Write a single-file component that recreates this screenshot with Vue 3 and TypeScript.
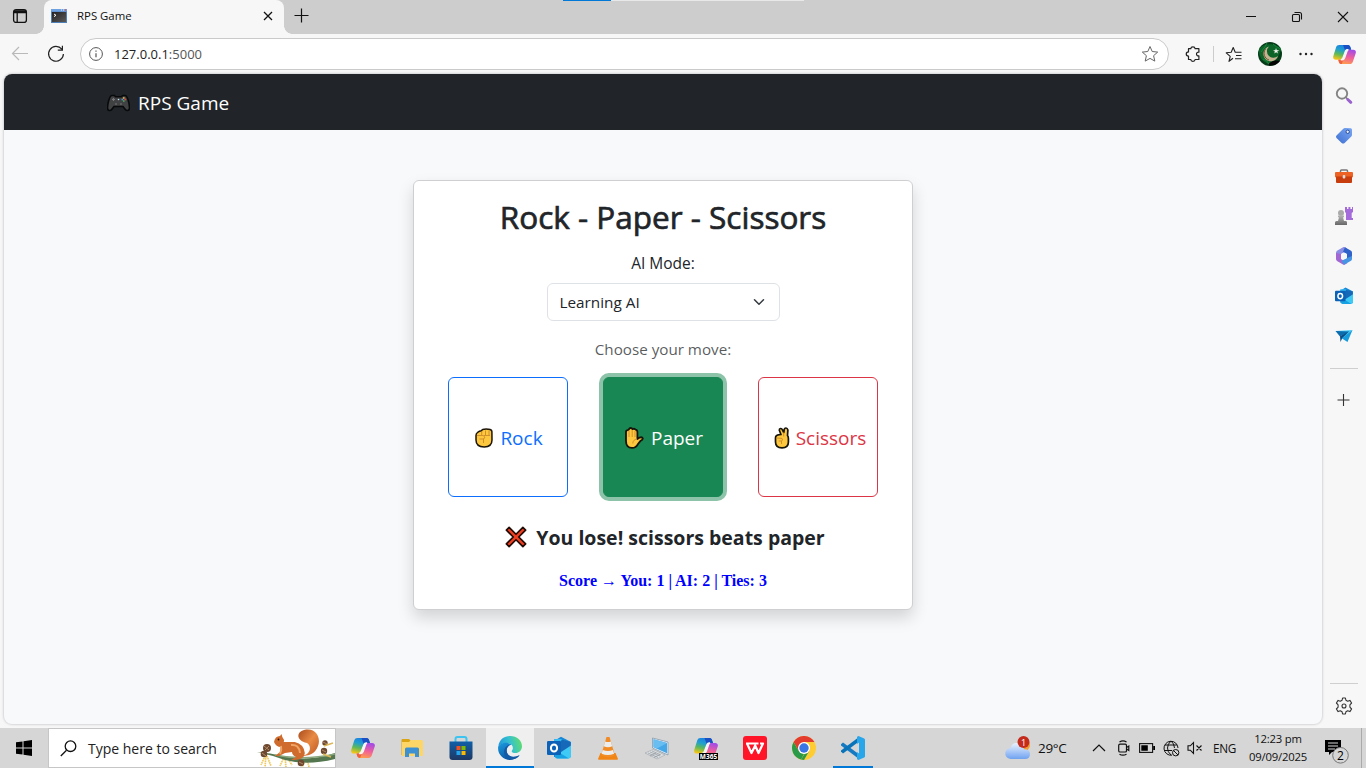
<script setup lang="ts">
import { ref } from 'vue'

type Move = 'rock' | 'paper' | 'scissors'

const moves: { id: Move; label: string }[] = [
  { id: 'rock', label: 'Rock' },
  { id: 'paper', label: 'Paper' },
  { id: 'scissors', label: 'Scissors' },
]
const selected = ref<Move>('paper')
const score = { you: 1, ai: 2, ties: 3 }
</script>

<template>
  <div class="screen">
    <svg class="defs" width="0" height="0">
      <defs>
        <linearGradient id="cpA" x1="0.6" y1="0" x2="0.3" y2="1">
          <stop offset="0" stop-color="#1b7fe0" /><stop offset="0.35" stop-color="#1f9fd0" />
          <stop offset="0.65" stop-color="#5cb85a" /><stop offset="1" stop-color="#f5c514" />
        </linearGradient>
        <linearGradient id="cpB" x1="0.6" y1="0" x2="0.3" y2="1">
          <stop offset="0" stop-color="#a64be6" /><stop offset="0.5" stop-color="#f0609a" />
          <stop offset="1" stop-color="#ffa04a" />
        </linearGradient>
        <linearGradient id="edA" x1="0" y1="0.5" x2="1" y2="0.3">
          <stop offset="0" stop-color="#1f95dc" /><stop offset="0.5" stop-color="#35c1cf" /><stop offset="1" stop-color="#62dd6a" />
        </linearGradient>
        <linearGradient id="edB" x1="0" y1="0" x2="0.6" y2="1">
          <stop offset="0" stop-color="#1a9de0" /><stop offset="1" stop-color="#0c4f9c" />
        </linearGradient>
        <linearGradient id="storeG" x1="0" y1="0" x2="0" y2="1">
          <stop offset="0" stop-color="#0f5fa8" /><stop offset="1" stop-color="#1f3864" />
        </linearGradient>
        <linearGradient id="cloudG" x1="0" y1="0" x2="0" y2="1">
          <stop offset="0" stop-color="#eaf3ff" /><stop offset="1" stop-color="#6fa2f0" />
        </linearGradient>
        <linearGradient id="tailG" x1="0" y1="0" x2="1" y2="1">
          <stop offset="0" stop-color="#a94c1c" /><stop offset="0.5" stop-color="#e98a44" /><stop offset="1" stop-color="#b9561f" />
        </linearGradient>
        <linearGradient id="tagG" x1="1" y1="0" x2="0" y2="1">
          <stop offset="0" stop-color="#7aa7f3" /><stop offset="1" stop-color="#3e6fd2" />
        </linearGradient>
        <linearGradient id="greyG" x1="0" y1="0" x2="0" y2="1">
          <stop offset="0" stop-color="#b5b5b5" /><stop offset="1" stop-color="#686868" />
        </linearGradient>
        <linearGradient id="termG" x1="0" y1="0" x2="1" y2="1">
          <stop offset="0" stop-color="#222" /><stop offset="1" stop-color="#5a5a5a" />
        </linearGradient>
        <symbol id="copilot" viewBox="0 0 24 24">
          <path d="M6.500 2H15c1.700 0 2.500.6 3 2l1 3h-3.500c-1.500 0-2.200.7-2.700 2.200L10.500 15c-.6 1.700-1.400 2.500-3 2.500H3C.8 17.500-.3 16 .3 13.800L3.200 4.500C3.800 2.800 4.800 2 6.500 2z" fill="url(#cpA)" />
          <path d="M10.500 2H15c1.700 0 2.500.6 3 2l1 3h-3.500c-1.400 0-2 .6-2.500 1.800z" fill="#1b4fc4" />
          <path d="M17.500 22H9.300c-1.700 0-2.500-.7-3-2l-.8-2.500h2c1.600 0 2.400-.8 3-2.500l2.300-6c.6-1.500 1.300-2 2.700-2h5.700c2.200 0 3.100 1.500 2.500 3.600l-3 9C20.100 21.300 19.200 22 17.500 22z" fill="url(#cpB)" />
          <path d="M5.500 17.500h2c1.600 0 2.400-.8 3-2.500l.6 1.200L9.200 22c-1.700 0-2.500-.8-3-2z" fill="#f0603c" />
          <path d="M13.100 8.200c.5-1 1.200-1.200 2-1.200h.9c-.8.4-1.100.9-1.500 2l-2.300 6.500c-.5 1.400-1 2-2.300 2H8.200c1.100-.3 1.800-1 2.300-2.500z" fill="#f7f7f7" stroke="#f7f7f7" stroke-width="1.300" />
        </symbol>
        <symbol id="outlook" viewBox="0 0 24 24">
          <path d="M7 5 14 .8 24 6v15H7z" fill="#1688d8" />
          <path d="M7 3h7l4 2v6H7z" fill="#35b8f1" />
          <path d="M15 3.500 23.500 6v5L14 17 9 12z" fill="#1569b8" />
          <path d="M8 20 24 9.500V20a2.500 2.500 0 0 1-2.500 2.500h-11A2.500 2.500 0 0 1 8 20z" fill="#3fcaf5" />
          <path d="M8 14 22 22.500H10.500A2.500 2.500 0 0 1 8 20z" fill="#18a1e2" />
          <rect y="5" width="14" height="14" rx="1.300" fill="#0b62b6" />
          <ellipse cx="7" cy="12" rx="3.100" ry="3.500" fill="none" stroke="#fff" stroke-width="2" />
        </symbol>
      </defs>
    </svg>

    <header class="titlebar">
      <svg class="workspaces" width="16" height="16" viewBox="0 0 16 16" fill="none" stroke="#111" stroke-width="1.300">
        <rect x="1.600" y="1.600" width="12.800" height="12.800" rx="2.500" /><path d="M2 4.500h12M5.200 5v9" /><path d="M2 3.300h12" stroke-width="2.200" />
      </svg>
      <div class="tab">
        <svg width="16" height="14" viewBox="0 0 16 14">
          <rect width="16" height="14" fill="#4d7fb9" /><rect y="0" width="16" height="2.500" fill="#6ea1df" />
          <rect x="1" y="3" width="14" height="10" fill="url(#termG)" />
          <path d="M10 1h1M12 1h1" stroke="#dce9ff" /><path d="M14 1h1.200" stroke="#e55640" stroke-width="1.300" />
          <path d="M3 5l2 1.300-2 1.300" stroke="#fff" fill="none" />
        </svg>
        <span class="tab-title">RPS Game</span>
        <svg width="10" height="10" viewBox="0 0 10 10" stroke="#111" stroke-width="1.300"><path d="M1 1l8 8M9 1 1 9" /></svg>
      </div>
      <svg class="new-tab" width="15" height="15" viewBox="0 0 15 15" stroke="#111" stroke-width="1.200"><path d="M7.500.5v14M.5 7.500h14" /></svg>
      <div class="window-buttons">
        <svg width="46" height="34" viewBox="0 0 46 34" stroke="#111"><path d="M18 16.500h10" /></svg>
        <svg width="46" height="34" viewBox="0 0 46 34" fill="none" stroke="#111" stroke-width="1.100"><rect x="18.500" y="14.500" width="7" height="7" rx="1" /><path d="M20.500 12.500h5a2 2 0 0 1 2 2v5" /></svg>
        <svg width="46" height="34" viewBox="0 0 46 34" stroke="#111" stroke-width="1.100"><path d="m18 12 10 10M28 12 18 22" /></svg>
      </div>
      <div class="progress"><i></i></div>
    </header>

    <div class="toolbar">
      <svg class="back" width="18" height="16" viewBox="0 0 18 16" fill="none" stroke="#b9b9b9" stroke-width="1.200"><path d="M17 7.500H1.500M8 1 1.500 7.500 8 14" /></svg>
      <svg class="reload" width="18" height="18" viewBox="0 0 18 18" fill="none" stroke="#222" stroke-width="1.200"><path d="M14.800 4.200A7.400 7.400 0 1 0 16.400 9M15.400.8v4.400h-4.600" /></svg>
      <div class="address">
        <svg width="14" height="14" viewBox="0 0 14 14" fill="none" stroke="#555"><circle cx="7" cy="7" r="6.400" /><path d="M7 6.200v4M7 3.600v1.200" stroke-width="1.200" /></svg>
        <span class="url">127.0.0.1<em>:5000</em></span>
        <svg width="18" height="18" viewBox="0 0 18 18" fill="none" stroke="#666" stroke-linejoin="round"><path d="m9 1.500 2.200 5 5.500.6-4.100 3.600 1.200 5.400L9 13.400l-4.800 2.700 1.200-5.400-4.100-3.600 5.500-.6z" /></svg>
      </div>
      <svg class="puzzle" width="16" height="16" viewBox="0 0 16 16" fill="none" stroke="#222" stroke-width="1.200" stroke-linejoin="round"><path d="M3.500 2.700h2.300C5.900.3 9.900.3 10.100 2.700h3.800v3.500c-3.200-.5-3.200 4.200 0 3.700v3.600h-3.800c-.2 2.500-4.200 2.500-4.300 0H3.500v-3.400c-3-.1-3-4.100 0-4.200z" /></svg>
      <i class="tool-sep"></i>
      <svg class="favs" width="17" height="17" viewBox="0 0 17 17" fill="none" stroke="#222" stroke-width="1.100" stroke-linejoin="round"><path d="M8 12.300 4 15.300l1.200-5L1.200 6.800l5-.5L8.200 1.500l2 4.800h6.300M11 9.500h5.500M10 12.700h6.500" /></svg>
      <svg class="avatar" width="24" height="24" viewBox="0 0 24 24">
        <circle cx="12" cy="12" r="12" fill="#063b1a" /><path d="M1 8C4 1 18 0 23 8l-4 9-9 5Q0 17 1 8" fill="#0c6429" />
        <path d="M3 10q5-6 6-9M5 17q4 1 6 5M15 2q3 3 8 5" stroke="#15863b" fill="none" /><path d="M11 4.500a7.500 7.500 0 1 0 9 9.500A6.500 6.500 0 1 1 11 4.500" fill="#c4b391" />
        <path d="M7.500 7a7 7 0 0 0 3.500 11" stroke="#6b5533" fill="none" /><path d="m18 6 .8 2.200 2.500-.1-2 1.400.7 2.100-1.900-1.300-1.800 1.300.6-2.200-1.900-1.200h2.300z" fill="#f4f4ee" /><path d="M11 21.500q5-4.500 11-2.500-4 5-11 4.500z" fill="#050505" />
      </svg>
      <svg class="dots" width="14" height="4" viewBox="0 0 14 4" fill="#222"><circle cx="1.500" cy="2" r="1.200" /><circle cx="7" cy="2" r="1.200" /><circle cx="12.500" cy="2" r="1.200" /></svg>
      <svg class="copilot-btn" width="23" height="23"><use href="#copilot" /></svg>
    </div>

    <div class="middle">
      <main class="page">
        <nav class="navbar">
          <svg width="23" height="18" viewBox="0 0 23 18">
            <path d="M5 1.500h2.500l1 1.200h6l1-1.200H18c2.500 0 4.500 8.500 4.500 12.300 0 3.300-3 3.400-4.400 1.400L16 12.500H7L4.900 15.200C3.500 17.200.5 17.100.5 13.800.5 10 2.500 1.500 5 1.500z" fill="#404142" stroke="#08090a" stroke-width="1.600" />
            <path d="M5 5.500h3M6.500 4v3M8 10h2M13 10h2" stroke="#777" stroke-width="1.200" /><circle cx="11.500" cy="5.500" r=".8" fill="#b9e4ef" />
            <circle cx="16.800" cy="4" r=".9" fill="#e4b13a" /><circle cx="18.300" cy="5.500" r=".9" fill="#d8483d" /><circle cx="15.300" cy="5.500" r=".9" fill="#3d91d6" /><circle cx="16.800" cy="7" r=".9" fill="#4ca655" />
          </svg>
          <span>RPS Game</span>
        </nav>

        <section class="card">
          <h1>Rock - Paper - Scissors</h1>
          <label class="mode-label">AI Mode:</label>
          <div class="select">
            <span>Learning AI</span>
            <svg width="12" height="12" viewBox="0 0 16 16" fill="none" stroke="#343a40" stroke-width="2" stroke-linecap="round" stroke-linejoin="round"><path d="m2 5 6 6 6-6" /></svg>
          </div>
          <p class="hint">Choose your move:</p>
          <div class="moves">
            <button v-for="m in moves" :key="m.id" :class="['move', m.id, { active: selected === m.id }]" @click="selected = m.id">
              <svg v-if="m.id === 'rock'" width="18" height="20" viewBox="0 0 18 20" stroke-linejoin="round">
                <path d="M2.500 4.500Q4.500 2.600 6.500 2.700q.5-1.700 3-1.500 2-.4 3.500.1 3.500-.3 3.900 2.200L17 12q0 6.900-7.800 6.900Q1 18.900 1 12V7.500q0-2 1.500-3z" fill="#fdc73e" stroke="#1c1508" stroke-width="1.500" />
                <path d="M2 7.500h6.500q2.500 3-.5 3.500H4.500M8.500 10.800V15M6.700 3.500v4M10.500 2.500v5M14 2.500V8M9 7.500h6" fill="none" stroke="#d0902c" />
              </svg>
              <svg v-else-if="m.id === 'paper'" width="20" height="22" viewBox="0 0 20 22" stroke-linejoin="round">
                <path d="M2 5q0-1.800 1.800-1.800L5 2.200q.4-1.200 1.700-1.200T8.500 2.100q2.200-1 3 .6 1.900.2 1.900 2.300v7l2.200-1.400q2.500-.9 3.200.7.2 1.300-2.300 2.600l-2.700 3.400Q12 20.900 8 20.900q-6 0-6-7z" fill="#fdc73e" stroke="#171509" stroke-width="1.800" />
                <path d="M5 3.500V10M8.200 3V10M11 4v6M13 12q-4.200.7-4.200 4.500" fill="none" stroke="#d0902c" />
              </svg>
              <svg v-else width="16" height="22" viewBox="0 0 16 22" stroke-linejoin="round">
                <path d="M1.500 11q0-3 4-3.300L7 7.500 5.300 3.300Q5.200 1.700 6.500 1.500t2 1.500l1.300 2.500.5-3.300Q10.700.9 12 1t1.900 1.900l-.4 5.600q.9 1 .9 3V15q0 5.900-6.400 5.900T1.500 15z" fill="#fdc73e" stroke="#171509" stroke-width="1.700" />
                <path d="M9.700 5.500v4M2.500 11l5.500.4q1.200 1.800-.5 2.600H4.700M7.500 14v3" fill="none" stroke="#d0902c" />
              </svg>
              <span>{{ m.label }}</span>
            </button>
          </div>
          <div class="result">
            <svg width="22" height="22" viewBox="0 0 24 24"><path d="M4.500 1.500 12 9l7.500-7.500 3 3L15 12l7.500 7.500-3 3L12 15l-7.500 7.500-3-3L9 12 1.500 4.500z" fill="#ef3e20" stroke="#210b05" stroke-width="1.800" stroke-linejoin="round" /></svg>
            <strong>You lose! scissors beats paper</strong>
          </div>
          <p class="score">Score → You: {{ score.you }} | AI: {{ score.ai }} | Ties: {{ score.ties }}</p>
        </section>
      </main>

      <aside class="sidebar">
        <svg viewBox="0 0 18 18"><circle cx="7" cy="6.500" r="5.200" fill="none" stroke="#848484" stroke-width="1.900" /><path d="m11 10.500 2 2" stroke="#777" stroke-width="1.600" /><path d="m12.800 12.500 3 2.800" stroke="#9a62cf" stroke-width="3" stroke-linecap="round" /></svg>
        <svg viewBox="0 0 18 18"><path d="m10 1 5.800.2q1.200.2 1.200 1.500v5q0 1-.7 1.700l-6.700 6.500q-1.500 1.300-2.900 0L1.500 11q-1.200-1.300 0-2.600l6.800-6.700Q9 1 10 1z" fill="url(#tagG)" /><circle cx="12.700" cy="4.800" r="1.700" fill="#e5edff" stroke="#2e4f98" /></svg>
        <svg viewBox="0 0 18 18"><path d="M5.500 5.500V4q0-1 1-1h5q1 0 1 1v1.500" fill="none" stroke="#777" stroke-width="1.500" /><rect y="5" width="18" height="5.500" rx="1" fill="#ed6325" /><path d="M1 9.500h16V15q0 1-1 1H2q-1 0-1-1z" fill="#c83d0d" /><rect x="7.700" y="8" width="2.600" height="3.500" rx="1" fill="#ddd" /></svg>
        <svg viewBox="0 0 18 18"><path d="M10 0h2v2h1.400V0h2v2H17V0h1v5l-1.300 1v5H18v2h-7V6L10 5z" fill="#a46cdb" /><circle cx="6" cy="6" r="3" fill="#aaa" /><path d="M3 8.500h6v1.800H8l1 3.700h2q1 0 1 1.500V18H0v-2.500Q0 14 1.500 14H3l1-3.700H3z" fill="url(#greyG)" /></svg>
        <svg viewBox="0 0 18 18"><path d="M8.500 0 2 3.800Q1 4.500 1 6v6l5-2V7l7-4-3-2.800Q9.300-.2 8.500 0z" fill="#8b8de4" /><path d="m10 .2 6 3.500q1 .7 1 2v6l-5 1.100V7L8 4.700z" fill="#2f62cb" /><path d="M1 6v6q0 1.300 1 1.900l6 3.700q1 .5 2 0l2.500-1.500L6 12V7z" fill="#a267d2" /><path d="m9 17.800 7-4q1-.6 1-2V9l-5 2-5.500 3z" fill="#4595e4" /><circle cx="9" cy="9" r="3" fill="#f7f7f7" /></svg>
        <svg viewBox="0 0 18 18"><use href="#outlook" /></svg>
        <svg viewBox="0 0 18 18"><path d="M.5 4 17.500 3 10.500 9z" fill="#43c8f4" /><path d="M.5 4 14 4.500 5 9.500z" fill="#0b6cae" /><path d="m5 9.200 9-5-7 7.500L5.500 15z" fill="#0a4d86" /><path d="m17.500 3-5 12-5.800-3.800z" fill="#169bdc" /></svg>
        <i class="rule"></i>
        <svg class="plus" viewBox="0 0 18 18" stroke="#333" stroke-width="1.100"><path d="M8.500 3v12M2.500 9h12" /></svg>
        <i class="rule low"></i>
        <svg class="gear" viewBox="0 0 18 18" fill="none" stroke="#333" stroke-width="1.100" stroke-linejoin="round"><path d="m7.600 1-.5 2.200-1.800 1-2.200-.8L1.400 6l1.700 1.800v2.400L1.400 12l1.700 2.600 2.200-.8 1.800 1 .5 2.200h2.800l.5-2.200 1.800-1 2.200.8 1.700-2.600-1.700-1.800V7.800L16.600 6l-1.700-2.600-2.200.8-1.800-1-.5-2.200z" /><circle cx="9" cy="9" r="2" /></svg>
      </aside>
    </div>

    <footer class="taskbar">
      <svg class="start" width="16" height="16" viewBox="0 0 16 16"><path d="M0 2.300 6.500 1.400v6.100H0zM7.500 1.300 16 0v7.500H7.500zM0 8.500h6.500v6.100L0 13.700zM7.500 8.500H16V16l-8.500-1.200z" /></svg>
      <div class="search">
        <svg width="17" height="17" viewBox="0 0 17 17" fill="none" stroke="#111" stroke-width="1.300"><circle cx="10.500" cy="6.200" r="5.300" /><path d="M6.500 10.300.8 16" /></svg>
        <span>Type here to search</span>
        <svg class="squirrel" width="78" height="39" viewBox="0 0 78 39">
          <path d="m8 27-4 9M9 27l-1 11M10 27l4 10M27 28l-4 9M28 28l1 10M30 28l5 8M49 30l-4 8M50 30l2 8" stroke="#f0c95e" stroke-width="1.700" stroke-dasharray="1.600 .6" />
          <path d="M0 23q14 1 25 4 28 6 53-3v6q-28 7-50 1Q14 26 0 23z" fill="#55774f" /><path d="M18 26q28 6 60-1" fill="none" stroke="#8aa77c" stroke-width="1.300" />
          <path d="M44 27C54 26 55 17 50 14 39 12 39 3 47 1c13-3 17 9 14 16-3 8-9 10-17 10z" fill="url(#tailG)" />
          <path d="M17 13q1-6 6-6l1.500-2 .8 3q2.200 2.500 1.500 5 6 0 11 0 9 2 10 11 0 6-10 7H34l5-3q-4-2-4-5l-7 1-6 3h-4l5-4 1-5q-5 0-7-5z" fill="#cf6b2c" />
          <path d="M34 16q8-1 9 8M24 17q1 4-1 8" fill="none" stroke="#f0a566" stroke-width="2" /><circle cx="21.500" cy="10.500" r=".9" fill="#281008" />
          <g fill="#6d482f"><circle cx="10" cy="19" r="4" /><circle cx="7" cy="25" r="3.300" /><circle cx="44" cy="34" r="3.300" /><circle cx="67" cy="22" r="3.200" /><circle cx="68" cy="14" r="2.700" /></g>
          <path d="m7 17 5 4M8 21l4-4M5 24l4 3M65 21l4 2M66 13l4 2M42 33l4 2" stroke="#b08967" /><path d="m67 17 9-3M66 25l8 3" stroke="#ddb85a" stroke-width="1.500" />
        </svg>
      </div>
      <div class="apps">
        <div class="slot"><svg width="25" height="25"><use href="#copilot" /></svg></div>
        <div class="slot"><svg viewBox="0 0 24 24"><path d="M2 3h7l2 2h10q1.500 0 1.500 1.500V19H1.500V4z" fill="#dba414" /><path d="M2 6h7l2-2h10.500Q23 4 23 5.500V19q0 1-1 1H2z" fill="#fed567" /><path d="M5 21v-8q0-1.500 1.500-1.500h11q1.500 0 1.500 1.500v8h-4v-3.500H9V21z" fill="#3d91d2" /></svg></div>
        <div class="slot"><svg viewBox="0 0 24 24"><path d="M6.500 6V3q0-2 2-2h7q2 0 2 2v3" fill="none" stroke="#3cc3ef" stroke-width="2" /><path d="M.5 5.500h23V21q0 3-3 3h-17q-3 0-3-3z" fill="url(#storeG)" /><path d="M7.500 10h4v4h-4z" fill="#f25022" /><path d="M12.500 10h4v4h-4z" fill="#7fba00" /><path d="M7.500 15h4v4h-4z" fill="#22a5ee" /><path d="M12.500 15h4v4h-4z" fill="#ffb900" /></svg></div>
        <div class="slot current"><svg viewBox="0 0 24 24"><path d="M.3 10C1.500 3.500 6 0 12.200 0 19 0 24 4.800 24 10.300c0 4.200-3.200 6.800-6.500 6.800-2.500 0-3.800-.9-3.800-1.900 0-.8 1.200-1.200 1.200-3.200 0-2.700-2.600-5-6.200-5C5 7 1.500 8.500.3 10z" fill="url(#edA)" /><path d="M.2 10.500C1.500 7.800 5.200 6.300 8.900 6.800c2 .3 3.500 1 4.600 2-3.200.4-5 3-4.800 6 .2 4.300 4.500 7.300 9.200 6.300l3.400-1.500C19.500 22 16 24 12 24 5 24-.9 18 .2 10.500z" fill="url(#edB)" /><path d="M13.500 8.800c-3.200.3-5.200 2.900-4.800 6.400.5 4.500 5.500 7.500 13 3.900C19 24 11 25 7.500 20.800 4 16 7 8.500 13.500 8.800z" fill="#155aa6" /></svg></div>
        <div class="slot"><svg viewBox="0 0 24 24"><use href="#outlook" /></svg></div>
        <div class="slot"><svg viewBox="0 0 24 24"><path d="M4.500 17h15L22 23q0 .8-1 .8H3q-1 0-1-.8z" fill="#f18413" /><path d="M10.500 1h3L19 19.500q-6.500 3.500-14 0z" fill="#f18b25" /><path d="m9.200 5.500-1.400 4.800q4.200 1.800 8.400 0l-1.400-4.800q-2.800 1-5.600 0zM6.700 14l-1.100 3.800q6.200 2.500 12.500 0L17 14q-5 2.200-10.300 0z" fill="#ececec" /></svg></div>
        <div class="slot"><svg viewBox="0 0 24 24"><path d="m7.500 2 15.500 4v13L7.500 12z" fill="#e8eff6" stroke="#7891a7" stroke-width=".7" /><path d="m8.500 3.300 13.500 3.600v10.300L8.500 11.200z" fill="#43a7e8" /><path d="m8.500 3.300 13.500 3.600-10 5.700-3.500-1.500z" fill="#68bdf1" /><path d="m0 17 8-3.500L20 19l-8 4z" fill="#dce0e3" stroke="#929ba1" stroke-width=".5" /><path d="m3 17 10 4.500M5 16l10 4M7 15l9 4M5 20l6-3M9 21.500l6-3" stroke="#90989e" stroke-width=".7" /></svg></div>
        <div class="slot m365"><svg viewBox="0 0 24 24"><use href="#copilot" /></svg><b>M365</b></div>
        <div class="slot"><svg viewBox="0 0 24 24"><rect width="24" height="24" rx="3" fill="#ff1428" /><path d="M3 7.500h12.500M4 7.500 8.500 17 12.200 9.500 15.500 17 20 7.500h-3" fill="none" stroke="#fff" stroke-width="2.200" stroke-linejoin="round" /></svg></div>
        <div class="slot"><svg viewBox="0 0 24 24"><circle cx="12" cy="12" r="12" fill="#ffcd32" /><path d="M1.600 6A12 12 0 0 1 22.400 6H12l-5.200 9z" fill="#e33b2e" /><path d="M1.600 6 6.800 15l5.200 3-3 5.600A12 12 0 0 1 1.600 6z" fill="#2a9a48" /><path d="M17.200 15 12 24a12 12 0 0 1-3-.4L12.500 18z" fill="#2a9a48" /><circle cx="12" cy="12" r="6" fill="#fff" /><circle cx="12" cy="12" r="4.700" fill="#3975e5" /></svg></div>
        <div class="slot running"><svg viewBox="0 0 24 24"><path d="M0 8.300 2 6.500l16 11.800V23L0 9.500z" fill="#157ac1" /><path d="m0 15.600 2 2L18 5.500V1L0 14.500z" fill="#0873b9" /><path d="m17.500 0 5.700 2.500Q24 3 24 4v16q0 1-.8 1.500L17.500 24q-1.500-.2-1.500-1.500v-21Q16 .2 17.500 0z" fill="#29a5ea" /><path d="m18 6.500-7.500 5.500 7.500 5.500z" fill="#d6d6d6" /></svg></div>
      </div>
      <div class="tray">
        <svg class="weather" width="26" height="26" viewBox="0 0 26 26"><circle cx="19" cy="10" r="6" fill="#f29b32" /><path d="M6 24a5.500 5.500 0 0 1-.5-11q1.500-5.500 7-5t6.500 6.200q6-.2 6 4.800t-5 5z" fill="url(#cloudG)" /><circle cx="18.500" cy="7" r="6" fill="#c42b1c" /><text x="18.500" y="10.500" text-anchor="middle">1</text></svg>
        <span class="temp">29°C</span>
        <svg class="chev" width="14" height="8" viewBox="0 0 14 8" fill="none" stroke="#111" stroke-width="1.200"><path d="m1 7 6-6 6 6" /></svg>
        <svg class="meet" width="12" height="16" viewBox="0 0 12 16" fill="none" stroke="#111" stroke-width="1.200"><rect x=".7" y="4.200" width="7.800" height="7.800" rx="1.300" /><path d="m8.500 7.500 2.300-1.500v4.500L8.500 9M1.500 2Q5-.2 8.500 2M1.500 14.200q3.300 2 7 0" /></svg>
        <svg class="battery" width="16" height="10" viewBox="0 0 16 10"><rect x=".6" y=".6" width="13" height="8.800" fill="none" stroke="#111" stroke-width="1.100" /><path d="M14.200 3H16v4h-1.800zM2.300 2.300h6.500v5.400H2.300z" /></svg>
        <svg class="globe" width="17" height="17" viewBox="0 0 17 17" fill="none" stroke="#111"><path d="M9 15.200A7 7 0 1 1 15 8M8 1Q4.500 4 4.500 8T8 15M8 1q3.300 2.500 3.500 7M2 5h12M1.500 10.500H9" /><circle cx="12.700" cy="12.700" r="3.200" fill="#d6d6d6" /><path d="m10.400 10.400 4.700 4.700" /></svg>
        <svg class="mute" width="16" height="14" viewBox="0 0 16 14" fill="none" stroke="#111" stroke-width="1.100"><path d="M1 4.800h2.300L6.500 1.500v11L3.300 9.200H1zM9.500 4.500l5 5M14.500 4.500l-5 5" /></svg>
        <span class="lang">ENG</span>
        <div class="clock"><span>12:23 pm</span><span>09/09/2025</span></div>
        <svg class="notes" width="26" height="32" viewBox="0 0 26 32"><path d="M1 8h16v12H8l-3 3v-3H1z" /><path d="M4 11h10M4 14h10M4 17h7" stroke="#d6d6d6" stroke-width="1.100" /><circle cx="16.500" cy="23.300" r="7.800" fill="#d6d6d6" stroke="#777" /><text x="16.500" y="27.500" text-anchor="middle">2</text></svg>
        <i class="peek"></i>
      </div>
    </footer>
  </div>
</template>

<style>
html, body { margin: 0; overflow: hidden; }
</style>

<style scoped>
* { box-sizing: border-box; }
.screen { position: relative; display: flex; flex-direction: column; width: 1366px; height: 768px; overflow: hidden; background: #f7f7f7; color: #212529; font-family: "Open Sans", "Noto Sans", sans-serif; }
svg { display: block; flex: none; }
.defs { position: absolute; }
p, h1 { margin: 0; }
span, strong, h1, p { white-space: nowrap; }

.titlebar { position: relative; display: flex; height: 34px; flex: none; background: #cdcdcd; }
.workspaces { margin: 8px 16px 0 12px; }
.tab { position: relative; display: flex; align-items: center; width: 240px; height: 34px; padding: 0 11px 2px 7px; border-radius: 8px 8px 0 0; background: #f7f7f7; }
.tab::before, .tab::after { content: ""; position: absolute; bottom: 0; width: 8px; height: 8px; }
.tab::before { left: -8px; background: radial-gradient(circle at 0 0, transparent 7.500px, #f7f7f7 8px); }
.tab::after { right: -8px; background: radial-gradient(circle at 100% 0, transparent 7.500px, #f7f7f7 8px); }
.tab-title { flex: 1; margin-left: 10px; padding-bottom: 2px; color: #111; font-size: 11.400px; }
.new-tab { margin: 8px 0 0 10px; }
.window-buttons { display: flex; margin-left: auto; }
.progress { position: absolute; left: 563px; top: 0; width: 241px; height: 1px; background: #e8e8e8; }
.progress i { display: block; width: 48px; height: 1px; background: #0078d7; }

.toolbar { display: flex; align-items: center; height: 40px; flex: none; background: #f7f7f7; }
.back { margin-left: 11px; }
.reload { margin-left: 18px; }
.address { display: flex; align-items: center; width: 1089px; height: 32px; margin-left: 15px; padding: 0 9px 0 8px; border: 1px solid #cacaca; border-radius: 16px; background: #fff; }
.url { flex: 1; margin-left: 11px; color: #222; font-size: 13px; }
.url em { color: #555; font-style: normal; }
.puzzle { margin-left: 16px; }
.tool-sep { width: 1px; height: 16px; margin-left: 12px; background: #ccc; }
.favs { margin-left: 11px; }
.avatar { margin-left: 16px; }
.dots { margin-left: 17px; }
.copilot-btn { margin-left: 20px; }

.middle { display: flex; height: 654px; flex: none; }
.page { width: 1318px; height: 650px; margin-left: 4px; overflow: hidden; border-radius: 8px; background: #f8f9fb; box-shadow: 0 0 2px 1px #d6d6d8; }
.navbar { display: flex; align-items: center; height: 56px; padding: 2px 0 0 103px; background: #212529; color: #fff; font-size: 19px; }
.navbar span { margin-left: 8px; }
.card { display: flex; flex-direction: column; align-items: center; width: 500px; height: 430px; margin: 50px 0 0 409px; padding-top: 17px; border: 1px solid #cfcfd1; border-radius: 6px; background: #fff; box-shadow: 0 8px 16px rgba(0, 0, 0, .15); }
h1 { height: 38px; font-size: 31.500px; font-weight: 400; line-height: 37px; -webkit-text-stroke: .7px #212529; }
.mode-label { height: 24px; margin-top: 15px; font-size: 15.500px; line-height: 24px; }
.select { display: flex; align-items: center; justify-content: space-between; width: 233px; height: 38px; margin-top: 8px; padding: 0 14px 0 12px; border: 1px solid #dee2e6; border-radius: 6px; font-size: 15.300px; }
.hint { height: 24px; margin-top: 16px; color: rgba(33, 37, 41, .75); font-size: 15.200px; line-height: 24px; }
.moves { display: flex; gap: 35px; margin-top: 16px; }
.move { display: flex; align-items: center; justify-content: center; gap: 7px; width: 120px; height: 120px; padding: 2px 0 0; border: 1px solid; border-radius: 6px; background: transparent; font: 19px "Open Sans", "Noto Sans", sans-serif; }
.rock { padding-left: 2px; color: #0d6efd; }
.paper { padding-left: 1px; color: #198754; }
.scissors { gap: 6px; padding-left: 4px; color: #dc3545; }
.move.active { background: #198754; border-color: #198754; color: #fff; box-shadow: 0 0 0 4px #8cc3a9; }
.result { display: flex; align-items: center; gap: 9px; height: 30px; margin-top: 25px; padding-left: 4px; font-size: 19.500px; }
.score { height: 24px; margin-top: 17px; color: #00f; font: bold 16px/24px "Liberation Serif", serif; }

.sidebar { display: flex; flex-direction: column; align-items: center; width: 44px; padding-top: 13px; }
.sidebar svg { width: 18px; height: 18px; margin-bottom: 22px; }
.rule { width: 28px; height: 1px; margin: 1px 0 22px; background: #cfcfcf; }
.sidebar .plus { margin-bottom: 0; }
.rule.low { margin: auto 0 13px; }
.sidebar .gear { margin-bottom: 13px; }

.taskbar { display: flex; align-items: center; height: 40px; background: #d6d6d6; }
.start { margin: 0 16px 0 16px; }
.search { display: flex; align-items: center; width: 288px; height: 40px; padding-left: 11px; border: 1px solid #c6c6c6; background: #fff; color: #222; font-size: 14px; }
.search span { margin-left: 11px; }
.squirrel { margin-left: auto; }
.apps { display: flex; gap: 1px; margin-left: 3px; }
.slot { position: relative; display: flex; align-items: center; justify-content: center; width: 48px; height: 40px; }
.slot svg { width: 24px; height: 24px; }
.current { background: #efefef; box-shadow: inset 0 -2px #0078d7; }
.running::after { content: ""; position: absolute; left: 4px; right: 4px; bottom: 0; height: 2px; background: #0078d7; }
.m365 b { position: absolute; left: 17px; top: 25px; width: 19px; height: 7px; background: #000; color: #fff; font-size: 6.500px; line-height: 7px; text-align: center; }
.tray { display: flex; align-items: center; height: 40px; margin-left: auto; color: #111; }
.weather text { fill: #fff; font-size: 9px; }
.temp { width: 30px; margin-left: 7px; font-size: 13.500px; letter-spacing: -.3px; }
.chev { margin-left: 24px; }
.meet { margin-left: 12px; }
.battery { margin-left: 9px; }
.globe { margin-left: 8px; }
.mute { margin-left: 7px; }
.lang { width: 24px; margin-left: 10px; font-size: 11.800px; letter-spacing: -.3px; }
.clock { display: flex; flex-direction: column; align-items: center; width: 60px; margin-left: 11px; font-size: 11.300px; line-height: 18px; letter-spacing: -.2px; }
.notes { margin-left: 16px; margin-right: 1px; }
.notes text { font-size: 12px; }
.peek { width: 1px; height: 40px; margin: 0 4px 0 10px; background: #aaa; }
</style>
